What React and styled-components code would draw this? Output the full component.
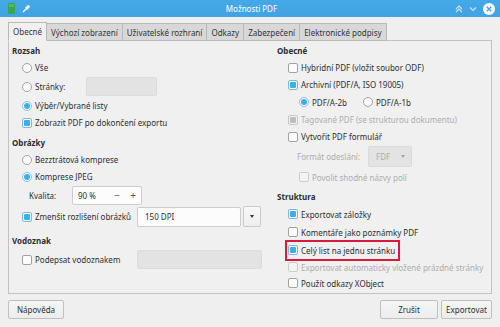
import React from "react";
import styled, { createGlobalStyle, css } from "styled-components";

const Global = createGlobalStyle`
  html, body { margin: 0; padding: 0; background: #efefef; }
  * { box-sizing: border-box; }
`;

const Window = styled.div`
  width: 500px;
  height: 327px;
  display: flex;
  flex-direction: column;
  background: #efefef;
  font-family: "Noto Sans", "DejaVu Sans", sans-serif;
  font-size: 8px;
  color: #2b2f33;
  overflow: hidden;
`;

const TitleBar = styled.div`
  height: 17px;
  flex: none;
  display: grid;
  grid-template-columns: 1fr auto 1fr;
  align-items: center;
  padding: 0 5px 0 8px;
  background: linear-gradient(#45a9e8, #3fa3e4);
  color: #fff;
`;

const TitleIcons = styled.div`
  display: flex;
  align-items: center;
  gap: 7px;
`;

const Title = styled.div`
  font-size: 8px;
  line-height: 17px;
`;

const TitleControls = styled.div`
  display: flex;
  align-items: center;
  justify-content: flex-end;
  gap: 6px;
`;

const Main = styled.div`
  flex: 1;
  display: flex;
  flex-direction: column;
  padding: 5px 8px 0 8px;
`;

const TabBar = styled.div`
  display: flex;
  align-items: flex-end;
  height: 19px;
  margin-bottom: -1px;
  position: relative;
  z-index: 1;
`;

const Tab = styled.div`
  height: 18px;
  padding: 0 4px;
  display: flex;
  align-items: center;
  border: 1px solid #b9b9b9;
  border-left-width: 0;
  background: #d8d8d8;
  color: #30353a;
  white-space: nowrap;
  &:first-child { border-left-width: 1px; }
  ${(p) =>
    p.$active &&
    css`
      height: 19px;
      background: #f0f0f0;
      border-bottom-color: #f0f0f0;
    `}
`;

const Panel = styled.div`
  height: 254px;
  flex: none;
  border: 1px solid #c2c2c2;
  background: #f0f0f0;
  display: grid;
  grid-template-columns: 265px 1fr;
  padding: 2px 0 0 3px;
`;

const Column = styled.div`
  display: flex;
  flex-direction: column;
`;

const Section = styled.div`
  display: flex;
  flex-direction: column;
  margin-top: ${(p) => p.$mt || 0}px;
`;

const SectionTitle = styled.div`
  height: 16px;
  line-height: 16px;
  font-weight: 700;
`;

const Row = styled.div`
  height: ${(p) => p.$h || 17}px;
  display: flex;
  align-items: center;
  padding-left: ${(p) => p.$indent || 0}px;
  gap: 3px;
  white-space: nowrap;
`;

const Check = styled.span`
  width: 10px;
  height: 10px;
  flex: none;
  border-radius: 2px;
  border: 1px solid ${(p) => (p.$disabled ? "#cdcdcd" : "#a2a2a2")};
  background: ${(p) => (p.$disabled ? "#f3f3f3" : "#fcfcfc")};
  padding: 1px;
  ${(p) =>
    p.$checked &&
    css`
      border-color: ${p.$disabled ? "#c6c6c6" : "#7cb8de"};
      &::after {
        content: "";
        display: block;
        width: 100%;
        height: 100%;
        border-radius: 1px;
        background: ${p.$disabled ? "#bdbdbd" : "#3daee9"};
      }
    `}
`;

const Radio = styled.span`
  width: 10px;
  height: 10px;
  flex: none;
  border-radius: 50%;
  border: 1px solid ${(p) => (p.$checked ? "#86c2e6" : "#a2a2a2")};
  background: #fcfcfc;
  padding: 1px;
  ${(p) =>
    p.$checked &&
    css`
      &::after {
        content: "";
        display: block;
        width: 100%;
        height: 100%;
        border-radius: 50%;
        background: #3daee9;
      }
    `}
`;

const Label = styled.span`
  color: ${(p) => (p.$disabled ? "#adadad" : "inherit")};
  ${(p) => p.$w && css`width: ${p.$w}px; flex: none;`}
`;

const TextField = styled.div`
  width: ${(p) => p.$w}px;
  height: 19px;
  flex: none;
  border-radius: 2px;
  border: 1px solid #dcdcdc;
  background: #e3e3e3;
`;

const SpinBox = styled.div`
  width: 70px;
  height: 19px;
  flex: none;
  display: flex;
  align-items: center;
  border: 1px solid #cdcdcd;
  border-radius: 2px;
  background: #fcfcfc;
  padding-left: 5px;
`;

const SpinValue = styled.span`
  flex: 1;
`;

const SpinButton = styled.span`
  width: 16px;
  text-align: center;
  font-size: 10px;
  color: #555;
  line-height: 17px;
`;

const ComboBox = styled.div`
  width: ${(p) => p.$w}px;
  height: ${(p) => p.$hgt || 20}px;
  flex: none;
  display: flex;
  align-items: center;
  justify-content: space-between;
  padding: 0 6px 0 7px;
  border: 1px solid ${(p) => (p.$disabled ? "#dadada" : "#cdcdcd")};
  border-radius: 2px;
  background: ${(p) => (p.$disabled ? "#e3e3e3" : "#fcfcfc")};
  color: ${(p) => (p.$disabled ? "#adadad" : "inherit")};
`;

const Arrow = styled.span`
  width: 0;
  height: 0;
  border-left: 2.5px solid transparent;
  border-right: 2.5px solid transparent;
  border-top: 3px solid ${(p) => p.$color || "#333"};
`;

const DropButton = styled.div`
  width: 18px;
  height: 21px;
  flex: none;
  margin-left: -1px;
  display: flex;
  align-items: center;
  justify-content: center;
  border: 1px solid #cbcbcb;
  border-radius: 2px;
  background: linear-gradient(#f8f8f8, #eeeeee);
`;

const Highlight = styled.span`
  display: inline-flex;
  align-items: center;
  gap: 3px;
  height: 15px;
  padding-right: 2px;
  outline: 2px solid #d81a3f;
  outline-offset: 1.5px;
`;

const Footer = styled.div`
  display: flex;
  align-items: flex-start;
  padding-top: 6px;
`;

const Button = styled.div`
  width: ${(p) => p.$w}px;
  height: 19px;
  display: flex;
  align-items: center;
  justify-content: center;
  border: 1px solid #c0c0c0;
  border-radius: 2px;
  background: linear-gradient(#f6f6f6, #ececec);
  margin-left: ${(p) => p.$ml || 0}px;
`;

const Spacer = styled.div`
  flex: 1;
`;

export default function App() {
  return (
    <Window>
      <Global />
      <TitleBar>
        <TitleIcons>
          <svg width="7" height="11" viewBox="0 0 7 11">
            <rect x="0" y="0" width="7" height="11" rx="1" fill="#38a84e" />
            <rect x="1" y="1" width="5" height="3" fill="#4cbb5f" />
          </svg>
          <svg width="9" height="9" viewBox="0 0 9 9">
            <path d="M1 8 L4 5" stroke="#fff" strokeWidth="1.2" />
            <path d="M3 4 L5 6 L8.2 2.8 L6.2 0.8 Z" fill="#fff" />
          </svg>
        </TitleIcons>
        <Title>Možnosti PDF</Title>
        <TitleControls>
          <svg width="8" height="8" viewBox="0 0 8 8">
            <polyline points="1,4 4,1 7,4" fill="none" stroke="#cfe8f9" strokeWidth="1.1" />
            <polyline points="1,7 4,4 7,7" fill="none" stroke="#cfe8f9" strokeWidth="1.1" />
          </svg>
          <svg width="8" height="8" viewBox="0 0 8 8">
            <polyline points="1,2.5 4,5.5 7,2.5" fill="none" stroke="#cfe8f9" strokeWidth="1.1" />
          </svg>
          <svg width="12" height="12" viewBox="0 0 12 12">
            <circle cx="6" cy="6" r="6" fill="#fff" />
            <path d="M3.8 3.8 L8.2 8.2 M8.2 3.8 L3.8 8.2" stroke="#3fa3e4" strokeWidth="1.4" />
          </svg>
        </TitleControls>
      </TitleBar>
      <Main>
        <TabBar>
          <Tab $active>Obecné</Tab>
          <Tab>Výchozí zobrazení</Tab>
          <Tab>Uživatelské rozhraní</Tab>
          <Tab>Odkazy</Tab>
          <Tab>Zabezpečení</Tab>
          <Tab>Elektronické podpisy</Tab>
        </TabBar>
        <Panel>
          <Column>
            <Section>
              <SectionTitle>Rozsah</SectionTitle>
              <Row $indent={10}>
                <Radio />
                <Label>Vše</Label>
              </Row>
              <Row $indent={10} $h={21}>
                <Radio />
                <Label $w={48}>Stránky:</Label>
                <TextField $w={71} />
              </Row>
              <Row $indent={10}>
                <Radio $checked />
                <Label>Výběr/Vybrané listy</Label>
              </Row>
              <Row $indent={10}>
                <Check $checked />
                <Label>Zobrazit PDF po dokončení exportu</Label>
              </Row>
            </Section>
            <Section $mt={4}>
              <SectionTitle>Obrázky</SectionTitle>
              <Row $indent={10}>
                <Radio />
                <Label>Bezztrátová komprese</Label>
              </Row>
              <Row $indent={10}>
                <Radio $checked />
                <Label>Komprese JPEG</Label>
              </Row>
              <Row $indent={17} $h={21}>
                <Label $w={40}>Kvalita:</Label>
                <SpinBox>
                  <SpinValue>90 %</SpinValue>
                  <SpinButton>−</SpinButton>
                  <SpinButton>+</SpinButton>
                </SpinBox>
              </Row>
              <Row $indent={10} $h={21}>
                <Check $checked />
                <Label $w={99}>Zmenšit rozlišení obrázků</Label>
                <ComboBox $w={104}>150 DPI</ComboBox>
                <DropButton>
                  <Arrow />
                </DropButton>
              </Row>
            </Section>
            <Section $mt={6}>
              <SectionTitle>Vodoznak</SectionTitle>
              <Row $indent={10} $h={21}>
                <Check />
                <Label $w={99}>Podepsat vodoznakem</Label>
                <TextField $w={125} />
              </Row>
            </Section>
          </Column>
          <Column>
            <Section>
              <SectionTitle>Obecné</SectionTitle>
              <Row $indent={11}>
                <Check />
                <Label>Hybridní PDF (vložit soubor ODF)</Label>
              </Row>
              <Row $indent={11}>
                <Check $checked />
                <Label>Archivní (PDF/A, ISO 19005)</Label>
              </Row>
              <Row $indent={22} $h={18}>
                <Radio $checked />
                <Label $w={48}>PDF/A-2b</Label>
                <Radio />
                <Label>PDF/A-1b</Label>
              </Row>
              <Row $indent={11}>
                <Check $checked $disabled />
                <Label $disabled>Tagované PDF (se strukturou dokumentu)</Label>
              </Row>
              <Row $indent={11}>
                <Check />
                <Label>Vytvořit PDF formulář</Label>
              </Row>
              <Row $indent={20} $h={22}>
                <Label $disabled $w={68}>Formát odeslání:</Label>
                <ComboBox $w={44} $hgt={21} $disabled>
                  FDF
                  <Arrow $color="#a5a5a5" />
                </ComboBox>
              </Row>
              <Row $indent={22} $h={20}>
                <Check $disabled />
                <Label $disabled>Povolit shodné názvy polí</Label>
              </Row>
            </Section>
            <Section $mt={2}>
              <SectionTitle>Struktura</SectionTitle>
              <Row $indent={11} $h={18}>
                <Check $checked />
                <Label>Exportovat záložky</Label>
              </Row>
              <Row $indent={11} $h={18}>
                <Check />
                <Label>Komentáře jako poznámky PDF</Label>
              </Row>
              <Row $indent={11} $h={18}>
                <Highlight>
                  <Check $checked />
                  <Label>Celý list na jednu stránku</Label>
                </Highlight>
              </Row>
              <Row $indent={11} $h={16}>
                <Check $disabled />
                <Label $disabled>Exportovat automaticky vložené prázdné stránky</Label>
              </Row>
              <Row $indent={11} $h={16}>
                <Check />
                <Label>Použít odkazy XObject</Label>
              </Row>
            </Section>
          </Column>
        </Panel>
        <Footer>
          <Button $w={56}>Nápověda</Button>
          <Spacer />
          <Button $w={58}>Zrušit</Button>
          <Button $w={51} $ml={3}>Exportovat</Button>
        </Footer>
      </Main>
    </Window>
  );
}
